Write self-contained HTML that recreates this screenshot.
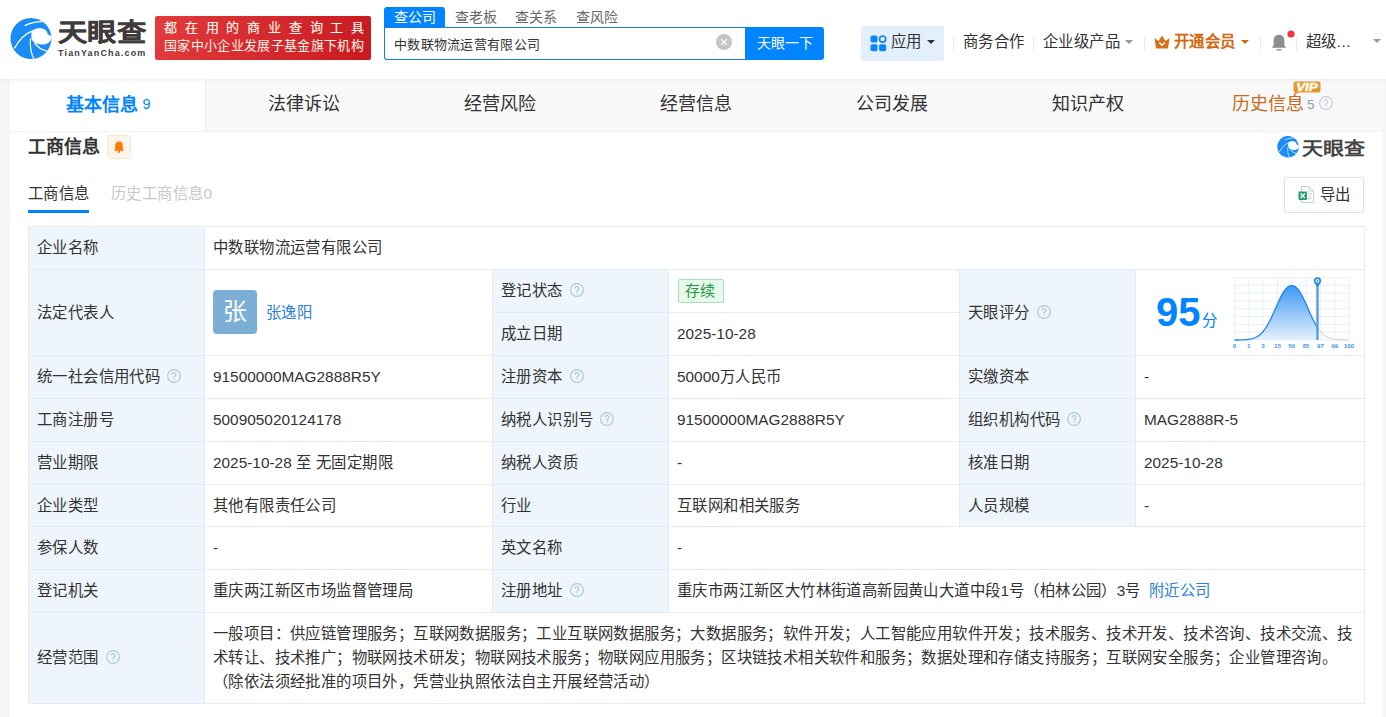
<!DOCTYPE html>
<html lang="zh-CN"><head><meta charset="utf-8">
<style>
*{box-sizing:border-box;margin:0;padding:0}
html,body{width:1386px;height:717px;overflow:hidden;background:#f5f5f5;font-family:"Liberation Sans",sans-serif;color:#333}
.abs{position:absolute;white-space:nowrap}
#hdr{position:absolute;left:0;top:0;width:1386px;height:79px;background:#fff;box-shadow:0 1px 3px rgba(0,0,0,.07);z-index:5}
#card{position:absolute;left:10px;top:79px;width:1373px;height:660px;background:#fff}
#tabs{position:absolute;left:0;top:0;width:1373px;height:52px;background:#f9f9f9}
#tabline{position:absolute;left:0;top:52px;width:1373px;height:1px;background:#f3f3f3}
.tab{position:absolute;top:0;height:52px;width:196px;text-align:center;font-size:18px;line-height:50px;color:#333;white-space:nowrap}
.tab.on{background:#fff;color:#0084ff;font-weight:bold}
.sep{position:absolute;width:1px;background:#e8e8e8}
.nav{position:absolute;top:31px;font-size:15.4px;letter-spacing:.4px;line-height:22px;color:#333;white-space:nowrap}
.caret{position:absolute;width:0;height:0;border-left:4px solid transparent;border-right:4px solid transparent;border-top:4px solid #333}
table{position:absolute;left:18px;top:147px;border-collapse:collapse;table-layout:fixed;width:1336px}
td{border:1px solid #e5ecf3;height:43px;font-size:15.4px;letter-spacing:.4px;line-height:22px;padding:0 8px;vertical-align:middle;color:#333;white-space:nowrap}
td.l{background:#eef5fc}
tr.h42 td{height:42px}
.q{display:inline-block;width:14px;height:14px;vertical-align:-1px;margin-left:7px}
a{color:#2a80db;text-decoration:none}
.n{letter-spacing:0}
</style></head><body>
<div id="hdr">
  <svg class="abs" style="left:10px;top:18px" width="42" height="41" viewBox="0 0 42 41">
    <circle cx="21" cy="20.5" r="20.5" fill="#1a8cf5"/>
    <path d="M21.7 13 C24 11,26 10.2,28.2 10.2 C31 10.2,33.3 10.4,35 11.5 C36.5 12.8,37.6 14.5,37.8 16.3 L42 18.5 C41.6 20.5,41 21.8,40.4 22.7 C38.5 25.3,36 26.5,33.9 26.5 C31 26.6,28.2 26.2,26.2 25.2 C24 24,22.2 22.8,21.7 21.4 C21.2 18.5,21.2 15.5,21.7 13Z" fill="#fff"/>
    <path d="M4.4 30.4 C9 22,15 15.5,22.6 12.8" fill="none" stroke="#fff" stroke-width="1.3"/>
    <path d="M20.6 20.5 C19.8 28,21 35,23.8 41" fill="none" stroke="#fff" stroke-width="1.2"/>
    <path d="M14.7 7.6 C20 5,26 3.6,32.3 3.6" fill="none" stroke="#fff" stroke-width="1.4"/>
    <path d="M24.5 24.8 C28 29.5,32 32,36.8 33" fill="none" stroke="#fff" stroke-width="1.4"/>
  </svg>
  <div class="abs" style="left:58px;top:17px;font-size:29px;line-height:36px;font-weight:bold;color:#3f3b3b;transform:scale(1.01,.86);transform-origin:0 0;-webkit-text-stroke:.4px #3f3b3b">天眼查</div>
  <div class="abs" style="left:58px;top:46px;font-size:9px;line-height:14px;font-weight:bold;color:#3f3b3b;letter-spacing:1.15px">TianYanCha.com</div>
  <div class="abs" style="left:155px;top:16px;width:216px;height:44px;border-radius:2px;background:linear-gradient(100deg,#e23a3d,#c81b21)"></div>
  <div class="abs" style="left:164px;top:17px;font-size:13px;line-height:22px;color:#fff6ea;letter-spacing:7.8px;-webkit-text-stroke:.15px #fff6ea">都在用的商业查询工具</div>
  <div class="abs" style="left:164px;top:35px;font-size:13px;line-height:22px;color:#fff6ea;letter-spacing:.34px">国家中小企业发展子基金旗下机构</div>
  <div class="abs" style="left:384px;top:7px;width:61px;height:21px;background:#0084ff;border-radius:3px 3px 0 0"></div>
  <div class="abs" style="left:394px;top:6px;font-size:14px;line-height:22px;color:#fff">查公司</div>
  <div class="abs" style="left:455px;top:6px;font-size:14px;line-height:22px;color:#666">查老板</div>
  <div class="abs" style="left:515px;top:6px;font-size:14px;line-height:22px;color:#666">查关系</div>
  <div class="abs" style="left:576px;top:6px;font-size:14px;line-height:22px;color:#666">查风险</div>
  <div class="abs" style="left:384px;top:27px;width:362px;height:33px;border:1px solid #1c7fd6;border-right:none;border-radius:0 0 0 3px;background:#fff"></div>
  <div class="abs" style="left:394px;top:34px;font-size:13px;letter-spacing:.3px;line-height:22px;color:#333">中数联物流运营有限公司</div>
  <svg class="abs" style="left:716px;top:34px" width="16" height="16" viewBox="0 0 16 16"><circle cx="8" cy="8" r="8" fill="#c4c4c9"/><path d="M5.2 5.2L10.8 10.8M10.8 5.2L5.2 10.8" stroke="#fff" stroke-width="1.3"/></svg>
  <div class="abs" style="left:745px;top:27px;width:79px;height:33px;background:#0084ff;border-radius:0 3px 3px 0"></div>
  <div class="abs" style="left:757px;top:32px;font-size:14px;letter-spacing:0px;line-height:22px;color:#fff">天眼一下</div>
  <div class="abs" style="left:861px;top:26px;width:83px;height:35px;border-radius:3px;background:#e4effd"></div>
  <svg class="abs" style="left:870px;top:35px" width="17" height="17" viewBox="0 0 16 16"><rect x="0.5" y="0.5" width="6.6" height="6.6" rx="1.6" fill="#0a84ff"/><circle cx="11.9" cy="3.8" r="2.9" fill="none" stroke="#0a84ff" stroke-width="1.5"/><rect x="0.5" y="8.6" width="6.6" height="6.6" rx="1.6" fill="#0a84ff"/><rect x="8.6" y="8.6" width="6.6" height="6.6" rx="1.6" fill="#0a84ff"/></svg>
  <div class="nav" style="left:891px">应用</div>
  <div class="caret" style="left:927px;top:40px"></div>
  <div class="sep" style="left:953px;top:37px;height:13px"></div>
  <div class="nav" style="left:963px">商务合作</div>
  <div class="sep" style="left:1033px;top:37px;height:13px"></div>
  <div class="nav" style="left:1043px">企业级产品</div>
  <div class="caret" style="left:1125px;top:40px;border-top-color:#999"></div>
  <div class="sep" style="left:1144px;top:37px;height:13px"></div>
  <svg class="abs" style="left:1154px;top:35px" width="16" height="14" viewBox="0 0 16 14"><path d="M0.5 3 L4.5 6 L8 0.5 L11.5 6 L15.5 3 L14 13.5 L2 13.5Z" fill="#d8711a"/><path d="M5.3 7.5 L8 10.3 L10.7 7.5" fill="none" stroke="#fff" stroke-width="1.4"/></svg>
  <div class="nav" style="left:1174px;color:#d06b14;font-weight:bold">开通会员</div>
  <div class="caret" style="left:1241px;top:40px;border-top-color:#d06b14"></div>
  <div class="sep" style="left:1260px;top:37px;height:13px"></div>
  <svg class="abs" style="left:1271px;top:34px" width="16" height="17" viewBox="0 0 16 17"><path d="M8 0.8 C4.3 0.8,2.6 3.6,2.6 7 L2.6 11.5 L0.8 13.8 L15.2 13.8 L13.4 11.5 L13.4 7 C13.4 3.6,11.7 0.8,8 0.8Z" fill="#8c8c91"/><rect x="5.5" y="15" width="5" height="1.6" rx=".8" fill="#8c8c91"/></svg>
  <svg class="abs" style="left:1287px;top:30px" width="8" height="8" viewBox="0 0 8 8"><circle cx="4" cy="4" r="3.6" fill="#f4333c"/></svg>
  <div class="sep" style="left:1296px;top:37px;height:13px"></div>
  <div class="nav" style="left:1306px">超级...</div>
  <div class="caret" style="left:1373px;top:39px;border-top-color:#999"></div>
</div>

<div id="card">
  <div id="tabs">
    <div class="tab on" style="left:0;width:195px;padding-left:2px;line-height:51px">基本信息<span style="font-size:14.5px;font-weight:normal;margin-left:4px;vertical-align:2px">9</span></div><div class="sep" style="left:195px;top:0;height:52px;background:#f0f0f0"></div>
    <div class="tab" style="left:196px">法律诉讼</div>
    <div class="tab" style="left:392px">经营风险</div>
    <div class="tab" style="left:588px">经营信息</div>
    <div class="tab" style="left:784px">公司发展</div>
    <div class="tab" style="left:980px">知识产权</div>
    <div class="abs" style="left:1222px;top:0;font-size:18px;line-height:50px;color:#c86b21">历史信息<span style="font-size:13.5px;color:#8a9bb0;margin-left:3px;vertical-align:1px">5</span></div>
    <svg class="abs" style="left:1309px;top:17px" width="14" height="14" viewBox="0 0 14 14"><circle cx="7" cy="7" r="6.4" fill="none" stroke="#c3ccd6" stroke-width="1.1"/><path d="M5.1 5.5a1.9 1.9 0 1 1 2.7 1.7c-.55.3-.8.6-.8 1.2v.5" fill="none" stroke="#c3ccd6" stroke-width="1.1"/><circle cx="7" cy="10.2" r=".65" fill="#c3ccd6"/></svg>
    <svg class="abs" style="left:1283px;top:2px" width="28" height="14" viewBox="0 0 28 14"><path d="M2.5 0.5 H25.5 A2 2 0 0 1 27.5 2.5 V9.5 A2 2 0 0 1 25.5 11.5 H6 L0.8 14 L2 11 A2 2 0 0 1 0.5 9.5 V2.5 A2 2 0 0 1 2.5 0.5Z" fill="url(#vipg)"/><defs><linearGradient id="vipg" x1="0" y1="1" x2="1" y2="0"><stop offset="0" stop-color="#e8962a"/><stop offset="1" stop-color="#e49a34"/></linearGradient></defs><text x="3.2" y="10" textLength="21.5" lengthAdjust="spacingAndGlyphs" font-family="Liberation Sans" font-weight="bold" font-style="italic" font-size="11" fill="#fffbe8" stroke="#fffbe8" stroke-width=".5">VIP</text></svg>
  </div>
  <div id="tabline"></div>
  <div class="abs" style="left:18px;top:56px;font-size:18px;line-height:24px;font-weight:bold;color:#333">工商信息</div>
  <div class="abs" style="left:97px;top:56px;width:24px;height:24px;border:1px solid #fbe6d6;background:#fff4ea;border-radius:3px"></div>
  <svg class="abs" style="left:103px;top:62px" width="12" height="12" viewBox="0 0 12 12"><path d="M6 0.6 C3.4 0.6,2.2 2.6,2.2 5 L2.2 8 L0.8 9.8 L11.2 9.8 L9.8 8 L9.8 5 C9.8 2.6,8.6 0.6,6 0.6Z" fill="#ff7a00"/><circle cx="6" cy="10.6" r="1.3" fill="#ff7a00"/></svg>
  <div class="abs" style="left:18px;top:104px;font-size:15.4px;letter-spacing:.4px;line-height:22px;color:#333">工商信息</div>
  <div class="abs" style="left:18px;top:131px;width:61px;height:3px;background:#0084ff"></div>
  <div class="abs" style="left:101px;top:104px;font-size:15.4px;letter-spacing:.4px;line-height:22px;color:#c5c9d0">历史工商信息0</div>
  <div class="abs" style="left:1274px;top:98px;width:80px;height:36px;border:1px solid #dde1e6;border-radius:2px"></div>
  <svg class="abs" style="left:1288px;top:107px" width="16" height="17" viewBox="0 0 16 17"><path d="M3.5 0.5 H11 L15.5 5 V16.5 H3.5Z" fill="#fff" stroke="#c9ced6" stroke-width="1"/><path d="M11 0.5 V5 H15.5" fill="none" stroke="#c9ced6" stroke-width="1"/><rect x="10" y="7" width="3.5" height="1" fill="#c9ced6"/><rect x="10" y="9.5" width="3.5" height="1" fill="#c9ced6"/><rect x="10" y="12" width="3.5" height="1" fill="#c9ced6"/><rect x="0.5" y="5.5" width="8.5" height="8.5" rx="1" fill="#21a366"/><path d="M2.6 7.5 L6.9 12 M6.9 7.5 L2.6 12" stroke="#fff" stroke-width="1.3"/></svg>
  <div class="abs" style="left:1310px;top:105px;font-size:15.4px;letter-spacing:.4px;line-height:22px;color:#333">导出</div>

  <table>
    <colgroup><col style="width:176px"><col style="width:288px"><col style="width:176px"><col style="width:291px"><col style="width:176px"><col style="width:229px"></colgroup>
    <tr><td class="l">企业名称</td><td colspan="5">中数联物流运营有限公司</td></tr>
    <tr><td class="l" rowspan="2">法定代表人</td><td rowspan="2" style="padding-left:8px"><span style="position:relative;top:-1px;display:inline-block;width:44px;height:44px;border-radius:4px;background:#7bafd6;color:#fff;font-size:24px;line-height:44px;text-align:center;vertical-align:middle">张</span><a style="margin-left:9px;vertical-align:middle">张逸阳</a></td><td class="l">登记状态<svg class="q" viewBox="0 0 14 14"><circle cx="7" cy="7" r="6.4" fill="none" stroke="#aec4db" stroke-width="1.1"/><path d="M5.1 5.5a1.9 1.9 0 1 1 2.7 1.7c-.55.3-.8.6-.8 1.2v.5" fill="none" stroke="#aec4db" stroke-width="1.1"/><circle cx="7" cy="10.2" r=".65" fill="#aec4db"/></svg></td><td><span style="display:inline-block;margin-left:1px;border:1px solid #a8e0b8;background:#e6f9ea;color:#1e9a3e;font-size:15px;line-height:22px;padding:0 7px 0 6px;border-radius:2px">存续</span></td><td class="l" rowspan="2">天眼评分<svg class="q" viewBox="0 0 14 14"><circle cx="7" cy="7" r="6.4" fill="none" stroke="#aec4db" stroke-width="1.1"/><path d="M5.1 5.5a1.9 1.9 0 1 1 2.7 1.7c-.55.3-.8.6-.8 1.2v.5" fill="none" stroke="#aec4db" stroke-width="1.1"/><circle cx="7" cy="10.2" r=".65" fill="#aec4db"/></svg></td><td rowspan="2"></td></tr>
    <tr><td class="l">成立日期</td><td class="n">2025-10-28</td></tr>
    <tr><td class="l">统一社会信用代码<svg class="q" viewBox="0 0 14 14"><circle cx="7" cy="7" r="6.4" fill="none" stroke="#aec4db" stroke-width="1.1"/><path d="M5.1 5.5a1.9 1.9 0 1 1 2.7 1.7c-.55.3-.8.6-.8 1.2v.5" fill="none" stroke="#aec4db" stroke-width="1.1"/><circle cx="7" cy="10.2" r=".65" fill="#aec4db"/></svg></td><td class="n">91500000MAG2888R5Y</td><td class="l">注册资本<svg class="q" viewBox="0 0 14 14"><circle cx="7" cy="7" r="6.4" fill="none" stroke="#aec4db" stroke-width="1.1"/><path d="M5.1 5.5a1.9 1.9 0 1 1 2.7 1.7c-.55.3-.8.6-.8 1.2v.5" fill="none" stroke="#aec4db" stroke-width="1.1"/><circle cx="7" cy="10.2" r=".65" fill="#aec4db"/></svg></td><td><span class="n">50000</span>万人民币</td><td class="l">实缴资本</td><td class="n">-</td></tr>
    <tr><td class="l">工商注册号</td><td class="n">500905020124178</td><td class="l">纳税人识别号<svg class="q" viewBox="0 0 14 14"><circle cx="7" cy="7" r="6.4" fill="none" stroke="#aec4db" stroke-width="1.1"/><path d="M5.1 5.5a1.9 1.9 0 1 1 2.7 1.7c-.55.3-.8.6-.8 1.2v.5" fill="none" stroke="#aec4db" stroke-width="1.1"/><circle cx="7" cy="10.2" r=".65" fill="#aec4db"/></svg></td><td class="n">91500000MAG2888R5Y</td><td class="l">组织机构代码<svg class="q" viewBox="0 0 14 14"><circle cx="7" cy="7" r="6.4" fill="none" stroke="#aec4db" stroke-width="1.1"/><path d="M5.1 5.5a1.9 1.9 0 1 1 2.7 1.7c-.55.3-.8.6-.8 1.2v.5" fill="none" stroke="#aec4db" stroke-width="1.1"/><circle cx="7" cy="10.2" r=".65" fill="#aec4db"/></svg></td><td class="n">MAG2888R-5</td></tr>
    <tr><td class="l">营业期限</td><td><span class="n">2025-10-28 </span>至 无固定期限</td><td class="l">纳税人资质</td><td class="n">-</td><td class="l">核准日期</td><td class="n">2025-10-28</td></tr>
    <tr class="h42"><td class="l">企业类型</td><td>其他有限责任公司</td><td class="l">行业</td><td>互联网和相关服务</td><td class="l">人员规模</td><td class="n">-</td></tr>
    <tr><td class="l">参保人数</td><td class="n">-</td><td class="l">英文名称</td><td class="n" colspan="3">-</td></tr>
    <tr><td class="l">登记机关</td><td>重庆两江新区市场监督管理局</td><td class="l">注册地址<svg class="q" viewBox="0 0 14 14"><circle cx="7" cy="7" r="6.4" fill="none" stroke="#aec4db" stroke-width="1.1"/><path d="M5.1 5.5a1.9 1.9 0 1 1 2.7 1.7c-.55.3-.8.6-.8 1.2v.5" fill="none" stroke="#aec4db" stroke-width="1.1"/><circle cx="7" cy="10.2" r=".65" fill="#aec4db"/></svg></td><td colspan="3">重庆市两江新区大竹林街道高新园黄山大道中段<span class="n">1</span>号（柏林公园）<span class="n">3</span>号<a style="margin-left:8px">附近公司</a></td></tr>
    <tr><td class="l" style="height:91px">经营范围<svg class="q" viewBox="0 0 14 14"><circle cx="7" cy="7" r="6.4" fill="none" stroke="#aec4db" stroke-width="1.1"/><path d="M5.1 5.5a1.9 1.9 0 1 1 2.7 1.7c-.55.3-.8.6-.8 1.2v.5" fill="none" stroke="#aec4db" stroke-width="1.1"/><circle cx="7" cy="10.2" r=".65" fill="#aec4db"/></svg></td><td colspan="5" style="white-space:normal;line-height:24px">一般项目：供应链管理服务；互联网数据服务；工业互联网数据服务；大数据服务；软件开发；人工智能应用软件开发；技术服务、技术开发、技术咨询、技术交流、技<br>术转让、技术推广；物联网技术研发；物联网技术服务；物联网应用服务；区块链技术相关软件和服务；数据处理和存储支持服务；互联网安全服务；企业管理咨询。<br>（除依法须经批准的项目外，凭营业执照依法自主开展经营活动）</td></tr>
  </table>
</div>
<svg class="abs" style="left:1277px;top:136px" width="22" height="21.5" viewBox="0 0 42 41">
    <circle cx="21" cy="20.5" r="20.5" fill="#1a8cf5"/>
    <path d="M21.7 13 C24 11,26 10.2,28.2 10.2 C31 10.2,33.3 10.4,35 11.5 C36.5 12.8,37.6 14.5,37.8 16.3 L42 18.5 C41.6 20.5,41 21.8,40.4 22.7 C38.5 25.3,36 26.5,33.9 26.5 C31 26.6,28.2 26.2,26.2 25.2 C24 24,22.2 22.8,21.7 21.4 C21.2 18.5,21.2 15.5,21.7 13Z" fill="#fff"/>
    <path d="M4.4 30.4 C9 22,15 15.5,22.6 12.8" fill="none" stroke="#fff" stroke-width="1.3"/>
    <path d="M20.6 20.5 C19.8 28,21 35,23.8 41" fill="none" stroke="#fff" stroke-width="1.2"/>
    <path d="M14.7 7.6 C20 5,26 3.6,32.3 3.6" fill="none" stroke="#fff" stroke-width="1.4"/>
    <path d="M24.5 24.8 C28 29.5,32 32,36.8 33" fill="none" stroke="#fff" stroke-width="1.4"/>
  </svg>
<div class="abs" style="left:1302px;top:139px;font-size:21px;line-height:24px;font-weight:bold;color:#454545;transform:scale(1,.84);transform-origin:0 0">天眼查</div>
<div class="abs" style="left:1156px;top:288px;font-size:40px;line-height:48px;font-weight:bold;color:#0084ff">95<span style="font-size:15.4px;font-weight:normal;margin-left:1px">分</span></div>
<svg id="chart" class="abs" style="left:1228px;top:277px" width="128" height="72" viewBox="0 0 128 72">
<defs><linearGradient id="gr" x1="0" y1="0" x2="0" y2="1"><stop offset="0" stop-color="#3d97f2"/><stop offset="1" stop-color="#e6f2fd"/></linearGradient></defs>
<g stroke="#e9f0f8" stroke-width="1"><line x1="6.5" y1="0.5" x2="6.5" y2="63"/><line x1="20.8" y1="0.5" x2="20.8" y2="63"/><line x1="35.1" y1="0.5" x2="35.1" y2="63"/><line x1="49.4" y1="0.5" x2="49.4" y2="63"/><line x1="63.8" y1="0.5" x2="63.8" y2="63"/><line x1="78.1" y1="0.5" x2="78.1" y2="63"/><line x1="92.4" y1="0.5" x2="92.4" y2="63"/><line x1="106.7" y1="0.5" x2="106.7" y2="63"/><line x1="121.0" y1="0.5" x2="121.0" y2="63"/><line x1="6.5" y1="0.5" x2="121" y2="0.5"/><line x1="6.5" y1="8.3" x2="121" y2="8.3"/><line x1="6.5" y1="16.1" x2="121" y2="16.1"/><line x1="6.5" y1="23.9" x2="121" y2="23.9"/><line x1="6.5" y1="31.8" x2="121" y2="31.8"/><line x1="6.5" y1="39.6" x2="121" y2="39.6"/><line x1="6.5" y1="47.4" x2="121" y2="47.4"/><line x1="6.5" y1="55.2" x2="121" y2="55.2"/><line x1="6.5" y1="63.0" x2="121" y2="63.0"/></g>
<polygon points="6.5,63 6.5,63.0 7.5,63.0 8.5,63.0 9.5,63.0 10.5,63.0 11.5,62.9 12.5,62.9 13.5,62.9 14.5,62.9 15.5,62.8 16.5,62.8 17.5,62.7 18.5,62.6 19.5,62.5 20.5,62.4 21.5,62.2 22.5,62.1 23.5,61.8 24.5,61.6 25.5,61.3 26.5,60.9 27.5,60.5 28.5,60.0 29.5,59.4 30.5,58.8 31.5,58.0 32.5,57.2 33.5,56.2 34.5,55.2 35.5,54.0 36.5,52.7 37.5,51.3 38.5,49.8 39.5,48.1 40.5,46.3 41.5,44.5 42.5,42.5 43.5,40.4 44.5,38.3 45.5,36.1 46.5,33.8 47.5,31.6 48.5,29.3 49.5,27.0 50.5,24.8 51.5,22.6 52.5,20.6 53.5,18.6 54.5,16.8 55.5,15.1 56.5,13.6 57.5,12.3 58.5,11.2 59.5,10.2 60.5,9.5 61.5,9.0 62.5,8.7 63.5,8.6 64.5,8.6 65.5,8.8 66.5,9.3 67.5,9.9 68.5,10.7 69.5,11.7 70.5,12.9 71.5,14.3 72.5,15.9 73.5,17.7 74.5,19.6 75.5,21.6 76.5,23.7 77.5,25.9 78.5,28.1 79.5,30.4 80.5,32.7 81.5,35.0 82.5,37.2 83.5,39.4 84.5,41.5 85.5,43.5 86.5,45.4 87.5,47.2 88.5,49.0 89.5,50.5 89.5,50.5 89.5,63" fill="url(#gr)"/>
<polyline points="6.5,63.0 7.5,63.0 8.5,63.0 9.5,63.0 10.5,63.0 11.5,62.9 12.5,62.9 13.5,62.9 14.5,62.9 15.5,62.8 16.5,62.8 17.5,62.7 18.5,62.6 19.5,62.5 20.5,62.4 21.5,62.2 22.5,62.1 23.5,61.8 24.5,61.6 25.5,61.3 26.5,60.9 27.5,60.5 28.5,60.0 29.5,59.4 30.5,58.8 31.5,58.0 32.5,57.2 33.5,56.2 34.5,55.2 35.5,54.0 36.5,52.7 37.5,51.3 38.5,49.8 39.5,48.1 40.5,46.3 41.5,44.5 42.5,42.5 43.5,40.4 44.5,38.3 45.5,36.1 46.5,33.8 47.5,31.6 48.5,29.3 49.5,27.0 50.5,24.8 51.5,22.6 52.5,20.6 53.5,18.6 54.5,16.8 55.5,15.1 56.5,13.6 57.5,12.3 58.5,11.2 59.5,10.2 60.5,9.5 61.5,9.0 62.5,8.7 63.5,8.6 64.5,8.6 65.5,8.8 66.5,9.3 67.5,9.9 68.5,10.7 69.5,11.7 70.5,12.9 71.5,14.3 72.5,15.9 73.5,17.7 74.5,19.6 75.5,21.6 76.5,23.7 77.5,25.9 78.5,28.1 79.5,30.4 80.5,32.7 81.5,35.0 82.5,37.2 83.5,39.4 84.5,41.5 85.5,43.5 86.5,45.4 87.5,47.2 88.5,49.0 89.5,50.5 89.5,50.5" fill="none" stroke="#1f86ea" stroke-width="1.3"/>
<polyline points="89.5,50.5 90.5,52.0 91.5,53.4 92.5,54.6 93.5,55.7 94.5,56.7 95.5,57.6 96.5,58.4 97.5,59.1 98.5,59.7 99.5,60.3 100.5,60.7 101.5,61.1 102.5,61.4 103.5,61.7 104.5,62.0 105.5,62.2 106.5,62.3 107.5,62.5 108.5,62.6 109.5,62.7 110.5,62.7 111.5,62.8 112.5,62.8 113.5,62.9 114.5,62.9 115.5,62.9 116.5,62.9 117.5,63.0 118.5,63.0 119.5,63.0 120.5,63.0" fill="none" stroke="#cfd3da" stroke-width="1.1"/>
<line x1="89.5" y1="6" x2="89.5" y2="63" stroke="#5a9be0" stroke-width="2.4"/>
<path d="M89.5 10 C87.3 7.2,85.9 5.6,85.9 3.9 A3.6 3.6 0 1 1 93.1 3.9 C93.1 5.6,91.7 7.2,89.5 10Z" fill="#2a88e6"/>
<circle cx="89.5" cy="3.9" r="1.9" fill="#fff"/><circle cx="89.5" cy="3.9" r="0.9" fill="#2a88e6"/>
<g font-family="Liberation Sans" font-size="6.2" font-weight="bold" fill="#4a93e2" text-anchor="middle"><text x="6.5" y="70.5">0</text><text x="20.8" y="70.5">1</text><text x="35.1" y="70.5">3</text><text x="49.4" y="70.5">15</text><text x="63.8" y="70.5">50</text><text x="78.1" y="70.5">85</text><text x="92.4" y="70.5">97</text><text x="106.7" y="70.5">99</text><text x="121.0" y="70.5">100</text></g>
</svg>
</body></html>
